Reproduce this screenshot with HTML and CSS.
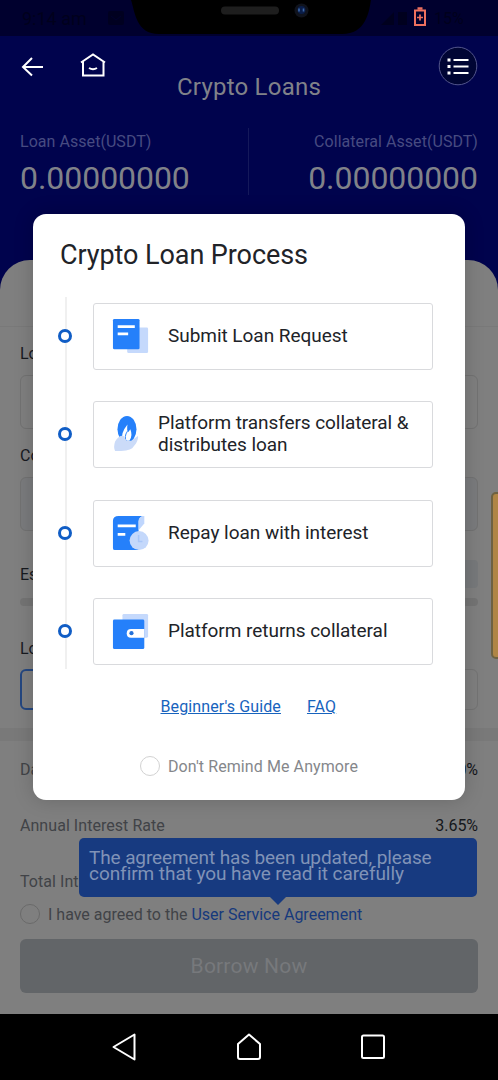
FILE: index.html
```html
<!DOCTYPE html>
<html lang="en">
<head>
<meta charset="utf-8">
<title>Crypto Loans</title>
<link rel="stylesheet" href="styles.css">
</head>
<body>
<div class="screen">
  <div class="status">
    <span class="time">9:14 am</span>
    <svg class="status-app" width="18" height="16"><rect x="1" y="1" width="16" height="14" rx="2" fill="#000020"/><path d="M4 6l5 4 5-4" stroke="#00002e" fill="none"/></svg>
    <svg class="notch" width="240" height="36" viewBox="0 0 240 36"><path d="M0 0H240C238 12 235 34 211 34H28C5 34 4 12 0 0Z" fill="#000"/><rect x="90" y="6.500" width="58" height="8" rx="4" fill="#1e1e1e"/><circle cx="170.500" cy="10.500" r="7" fill="#10131c"/><circle cx="170.500" cy="10" r="4" fill="#0a1d48"/><path d="M168 8.500v3M172.500 8.500v3" stroke="#3c69a8" stroke-width="1.600"/></svg>
    <svg class="signal" width="32" height="20"><path d="M1 17L14 4V17ZM18 4h9v13h-9z" fill="#00001e"/></svg>
    <svg class="battery" width="14" height="20" viewBox="0 0 14 20"><path d="M2 3.500H12V18H2Z" fill="none" stroke="#ee705f" stroke-width="2"/><path d="M4.500 1.500h5" stroke="#ee705f" stroke-width="2.500"/><path d="M4 10.500h6M7 7.500v6" stroke="#ee705f" stroke-width="1.700"/></svg>
    <span class="percent">15%</span>
  </div>
  <header class="header">
    <div class="bar">
      <svg class="back" width="24" height="22" viewBox="0 0 24 22"><path d="M22 11H2M11 2L2 11l9 8.500" fill="none" stroke="#fff" stroke-width="2"/></svg>
      <svg class="home" width="26" height="24" viewBox="0 0 26 24"><path d="M1 9.500L13 1.500l12 8M3 8.500V22.500H23.500V8.500M9 15q4 2.300 8 0" fill="none" stroke="#fff" stroke-width="2"/></svg>
      <h1 class="title">Crypto Loans</h1>
      <svg class="list" width="40" height="40" viewBox="0 0 40 40"><circle cx="20" cy="20" r="18.800" fill="#000534" stroke="#52558b"/><path d="M15.500 14h15M15.500 20.500h15M15.500 27h15" stroke="#fff" stroke-width="2.200"/><path d="M9.500 14h3M9.500 20.500h3M9.500 27h3" stroke="#fff" stroke-width="3"/></svg>
    </div>
    <div class="assets">
      <div class="asset"><div class="asset-name">Loan Asset(USDT)</div><div class="asset-value">0.00000000</div></div>
      <div class="asset asset-right"><div class="asset-name">Collateral Asset(USDT)</div><div class="asset-value">0.00000000</div></div>
    </div>
  </header>
  <main class="sheet">
    <div class="tabs"></div>
    <div class="form">
      <div class="label">Loan</div>
      <div class="field"></div>
      <div class="label label-second">Collateral</div>
      <div class="field field-filled"></div>
      <div class="estimate"><span>Est.</span><i class="chip"></i></div>
      <div class="track"></div>
      <div class="label label-term">Loan</div>
      <div class="terms"><i class="term term-active"></i><i class="term"></i></div>
    </div>
    <div class="band"></div>
    <div class="rates">
      <div class="rate"><span>Daily</span><b>0.010%</b></div>
      <div class="rate"><span>Annual Interest Rate</span><b>3.65%</b></div>
      <div class="rate"><span>Total Int</span></div>
      <div class="agree"><i class="radio"></i><span class="agree-text">I have agreed to the <a>User Service Agreement</a></span></div>
      <button class="borrow">Borrow Now</button>
      <div class="tooltip">The agreement has been updated, please<br><span class="tip-two">confirm that you have read it carefully</span></div>
    </div>
    <i class="side-handle"></i>
  </main>
  <nav class="nav">
    <svg width="26" height="30" viewBox="0 0 26 30"><path d="M23.500 2.500V27.500L2.500 15Z" fill="none" stroke="#fff" stroke-width="2" stroke-linejoin="round"/></svg>
    <svg width="26" height="30" viewBox="0 0 26 30"><path d="M13 2.500L24 12V25q0 2-2 2H4q-2 0-2-2V12Z" fill="none" stroke="#fff" stroke-width="2" stroke-linejoin="round"/></svg>
    <svg width="26" height="30" viewBox="0 0 26 30"><rect x="2" y="3.500" width="22" height="22.500" rx="1.500" fill="none" stroke="#fff" stroke-width="2"/></svg>
  </nav>
  <section class="modal">
    <h2 class="modal-title">Crypto Loan Process</h2>
    <ol class="steps">
      <li class="step"><i class="dot"></i><div class="card">
        <svg class="icon" width="40" height="40" viewBox="0 0 40 40"><rect x="16" y="11" width="22" height="27" rx="1.500" fill="#c5d9fc"/><rect x="1" y="2" width="28" height="32" rx="1.500" fill="#2580fa"/><path d="M6 10.200h18M6 17.800h11" stroke="#fff" stroke-width="3"/></svg>
        <span class="step-one">Submit Loan Request</span></div></li>
      <li class="step"><i class="dot"></i><div class="card card-tight">
        <svg class="icon icon-small" width="30" height="40" viewBox="0 0 30 40"><ellipse cx="15.500" cy="15" rx="10" ry="14" fill="#2580fa"/><path d="M11 27Q8 20 16 10Q15 17 17 18L19 15Q22 22 18 27Z" fill="#fff"/><path d="M16 17q-4 6-1 11" stroke="#2580fa" fill="none"/><path d="M3 28Q7 21 12 22L15 27H20L27 22Q28 24 25 30L21 35Q17 38 3 38Q1 34 3 28Z" fill="#cbdbf8"/></svg>
        <span class="step-two">Platform transfers collateral &amp;<br>distributes loan</span></div></li>
      <li class="step"><i class="dot"></i><div class="card">
        <svg class="icon" width="40" height="40" viewBox="0 0 40 40"><path d="M7 2H33Q28 3 28 8V38H3Q1 38 1 36V7Q1 2 7 2Z" fill="#2580fa"/><path d="M28 17V8Q28 2 34 2V10Z" fill="#bfd6fd"/><path d="M6 12.500h19M6 21.500h8" stroke="#fff" stroke-width="3"/><circle cx="28.500" cy="28" r="10" fill="#c4d8fb"/><path d="M28 22v7h4" stroke="#a9c6f8" stroke-width="1.600" fill="none"/></svg>
        <span class="step-three">Repay loan with interest</span></div></li>
      <li class="step"><i class="dot"></i><div class="card">
        <svg class="icon" width="40" height="40" viewBox="0 0 40 40"><rect x="11" y="2" width="27" height="25" rx="1.500" fill="#c5d9fc"/><rect x="1" y="8" width="33" height="31" rx="1.500" fill="#2580fa"/><path d="M34 18H20q-4.500 0-4.500 4.500T20 27H34Z" fill="#fff"/><circle cx="20.500" cy="22.300" r="2.200" fill="#2572d9"/></svg>
        <span class="step-four">Platform returns collateral</span></div></li>
    </ol>
    <div class="links"><a class="guide">Beginner's Guide</a><a class="faq">FAQ</a></div>
    <div class="remind"><i class="radio radio-light"></i><span class="remind-text">Don't Remind Me Anymore</span></div>
  </section>
</div>
</body>
</html>
```
FILE: styles.css
```css
* { box-sizing: border-box; }
body { margin: 0; font-family: Roboto, "Liberation Sans", sans-serif; font-size: 16px; background: #000; }
h1, h2, ol { margin: 0; padding: 0; font-weight: 400; list-style: none; }
svg, i { display: block; flex: none; }
span, a, h1, h2, .tooltip { white-space: nowrap; }
.screen { position: relative; width: 498px; height: 1080px; overflow: hidden; display: flex; flex-direction: column; background: #00034d; }
.status { height: 36px; flex: none; display: flex; align-items: center; background: #00002e; color: #00001c; padding-left: 22px; }
.time { width: 85px; font-size: 18px; }
.status-app { width: 18px; }
.notch { margin-left: 6px; }
.signal { margin-left: 9px; width: 32px; }
.battery { margin-left: 1px; margin-top: -2px; }
.percent { margin-left: 7px; font-size: 16px; }
.header { height: 224px; flex: none; color: #808289; }
.bar { height: 92px; display: flex; align-items: flex-start; padding-left: 21px; }
.back { margin-top: 20px; }
.home { margin: 17px 0 0 35px; }
.title { margin: 37px 0 0 71px; width: 143px; font-size: 24px; line-height: 28px; letter-spacing: .22px; }
.list { margin: 10px 0 0 118px; }
.assets { display: flex; margin: 0 20px; }
.asset { width: 229px; height: 67px; padding-top: 4px; border-right: 1px solid #15195b; }
.asset-right { text-align: right; border: 0; }
.asset-name { font-size: 16px; line-height: 20px; letter-spacing: .05px; color: #474b81; }
.asset-value { font-size: 32px; line-height: 38px; margin-top: 7px; letter-spacing: -.05px; }
.sheet { position: relative; flex: none; height: 754px; background: #7f7f7f; border-radius: 30px 30px 0 0; color: #171a1f; }
.tabs { height: 67px; border-bottom: 1px solid #797979; }
.form { padding: 17px 20px 0; }
.label { line-height: 20px; }
.field { height: 54px; margin-top: 11px; border: 1px solid #727272; border-radius: 6px; }
.label-second { margin-top: 17px; }
.field-filled { background: #7a7b7d; }
.estimate { display: flex; justify-content: space-between; align-items: center; height: 30px; margin-top: 28px; }
.chip { width: 68px; height: 28px; background: #77797b; border-radius: 4px; }
.track { height: 8px; margin-top: 9px; border-radius: 4px; background: #747474; }
.label-term { margin-top: 33px; }
.terms { display: flex; justify-content: space-between; margin-top: 10px; }
.term { width: 100px; height: 41px; border: 1px solid #737373; border-radius: 6px; }
.term-active { border: 2px solid #244780; }
.band { height: 13px; margin-top: 18px; background: #797979; }
.rates { position: relative; padding: 0 20px; color: #414347; }
.rate { height: 56px; display: flex; justify-content: space-between; align-items: center; letter-spacing: .05px; }
.rate b { font-weight: 400; color: #15171b; letter-spacing: -.05px; }
.agree { display: flex; align-items: center; height: 20px; margin-top: -5px; gap: 8px; letter-spacing: 0; }
.agree a { color: #16397c; }
.radio { width: 20px; height: 20px; border: 1.500px solid #6a6a6a; border-radius: 50%; }
.borrow { display: block; width: 458px; height: 54px; margin-top: 15px; padding: 0; border: 0; border-radius: 6px; background: #626568; color: #77797c; font-family: inherit; font-size: 21px; letter-spacing: .2px; }
.tooltip { position: absolute; left: 79px; top: 97px; width: 398px; height: 59px; padding: 12px 10px; border-radius: 5px; background: #173a80; color: #8093b7; font-size: 19px; line-height: 16px; letter-spacing: -.11px; }
.tip-two { letter-spacing: -.06px; }
.tooltip::after { content: ""; position: absolute; left: 190px; top: 58px; border: 9px solid transparent; border-top-color: #173a80; border-bottom: 0; }
.side-handle { position: absolute; left: 491px; top: 232px; width: 12px; height: 167px; border: 2px solid #6e6242; border-radius: 5px; background: #af8545; }
.nav { height: 66px; display: flex; align-items: center; justify-content: space-between; padding: 0 112px 0 110px; background: #000; }
.modal { position: absolute; left: 33px; top: 214px; width: 432px; height: 586px; padding: 25px 32px 0 27px; border-radius: 13px; background: #fff; color: #212328; box-shadow: 0 0 20px rgba(0, 0, 0, .18); }
.modal-title { font-size: 27px; line-height: 32px; letter-spacing: -.08px; }
.steps { height: 372px; margin: 26px 0 0 5px; padding-top: 6px; display: flex; flex-direction: column; gap: 31.300px; border-left: 2px solid #f0f0f0; }
.step { display: flex; align-items: center; margin-left: -9px; height: 67px; flex: none; }
.dot { width: 14px; height: 14px; margin-top: -1px; border: 3px solid #105dc5; border-radius: 50%; background: #fff; }
.card { width: 341px; height: 67px; margin-left: 21px; border: 1px solid #d9dadd; border-radius: 3px; display: flex; align-items: center; padding-left: 18px; gap: 18px; font-size: 19px; line-height: 22px; letter-spacing: -.04px; }
.icon { width: 38px; height: 38px; margin-top: -1px; }
.icon-small { width: 29px; height: 38px; }
.card-tight { gap: 17px; letter-spacing: -.08px; }
.step-one, .step-two { padding-bottom: 2px; }
.links { display: flex; gap: 26px; margin: 28px 0 0 100.500px; line-height: 20px; letter-spacing: .12px; color: #1763bd; }
.links a { text-decoration: underline; }
.remind { display: flex; align-items: center; gap: 8px; margin: 39px 0 0 80px; height: 20px; color: #85878b; letter-spacing: .09px; }
.radio-light { border-color: #d2d2d2; }
.nav svg { margin-left: 1px; }
```
